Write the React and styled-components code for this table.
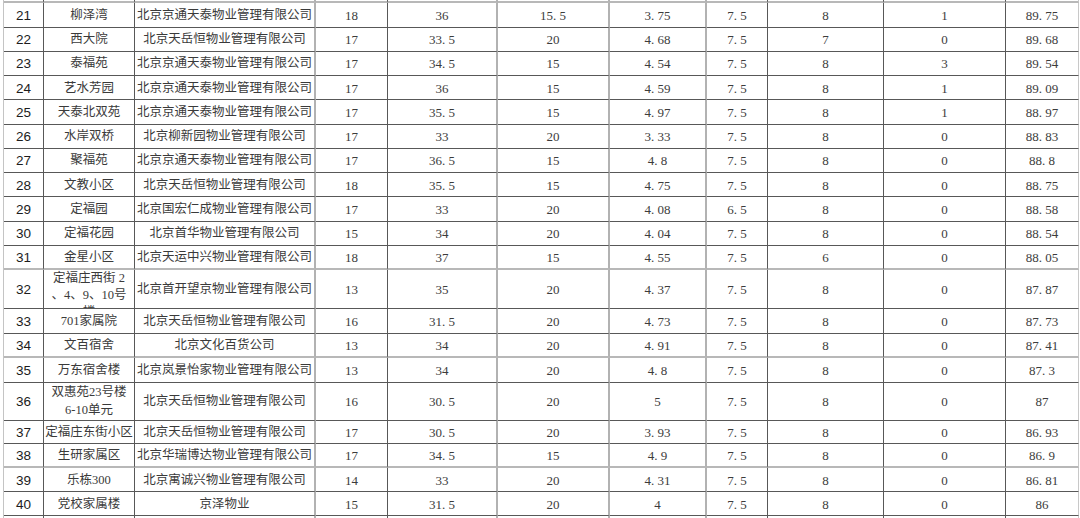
import React from 'react';
import styled, { createGlobalStyle } from 'styled-components';

const GlobalStyle = createGlobalStyle`
  html, body {
    margin: 0;
    padding: 0;
    background: #ffffff;
    overflow: hidden;
  }
`;

const Sheet = styled.div`
  width: 1080px;
  height: 518px;
  overflow: hidden;
  padding-left: 3px;
  box-sizing: border-box;
`;

const Table = styled.table`
  margin-top: -21px;
  border-collapse: separate;
  border-spacing: 0;
  table-layout: fixed;
  width: 1075px;
  border-left: 1px solid #c4c4c4;
`;

const Row = styled.tr`
  height: ${props => props.$h || 24.25}px;
`;

const Cell = styled.td`
  box-sizing: border-box;
  padding: 0;
  height: ${props => props.$h || 24.25}px;
  text-align: center;
  vertical-align: middle;
  white-space: nowrap;
  overflow: hidden;
  border-right: ${props => props.$soft ? '2px solid #b2b2b2' : '1px solid #585858'};
  border-bottom: ${props => props.$softRow ? '2px solid #b8b8b8' : '1px solid #585858'};
  ${props => props.$last && 'border-right: 1px solid #c8c8c8;'}
`;

const Index = styled.span`
  font-family: "Liberation Sans", Arial, sans-serif;
  font-size: 13.5px;
  color: #1c1c1c;
`;

const Name = styled.div`
  font-family: "Liberation Serif", "Noto Sans CJK SC", serif;
  font-size: 12.5px;
  line-height: ${props => props.$lh || 18}px;
  color: #3a3a3a;
  max-height: ${props => props.$max || 40}px;
  overflow: hidden;
`;

const Value = styled.span`
  font-family: "Liberation Serif", "Times New Roman", serif;
  font-size: 13px;
  color: #3c3c3c;
`;

const Dot = styled.span`
  display: inline-block;
  width: 0.5em;
  text-align: left;
`;

const cols = [40, 91, 181, 72, 110, 112, 97, 61, 116, 122, 73];
// columns whose right edge is drawn as a lighter, thicker line
const softCols = [2, 4, 5, 6];

const rows = [
  { n: 20, blank: true, softRow: true },
  { n: 21, name: '柳泽湾', co: '北京京通天泰物业管理有限公司', v: ['18', '36', '15.5', '3.75', '7.5', '8', '1', '89.75'] },
  { n: 22, name: '西大院', co: '北京天岳恒物业管理有限公司', v: ['17', '33.5', '20', '4.68', '7.5', '7', '0', '89.68'] },
  { n: 23, name: '泰福苑', co: '北京京通天泰物业管理有限公司', v: ['17', '34.5', '15', '4.54', '7.5', '8', '3', '89.54'] },
  { n: 24, name: '艺水芳园', co: '北京京通天泰物业管理有限公司', v: ['17', '36', '15', '4.59', '7.5', '8', '1', '89.09'] },
  { n: 25, name: '天泰北双苑', co: '北京京通天泰物业管理有限公司', v: ['17', '35.5', '15', '4.97', '7.5', '8', '1', '88.97'] },
  { n: 26, name: '水岸双桥', co: '北京柳新园物业管理有限公司', v: ['17', '33', '20', '3.33', '7.5', '8', '0', '88.83'] },
  { n: 27, name: '聚福苑', co: '北京京通天泰物业管理有限公司', v: ['17', '36.5', '15', '4.8', '7.5', '8', '0', '88.8'] },
  { n: 28, name: '文教小区', co: '北京天岳恒物业管理有限公司', v: ['18', '35.5', '15', '4.75', '7.5', '8', '0', '88.75'] },
  { n: 29, name: '定福园', co: '北京国宏仁成物业管理有限公司', v: ['17', '33', '20', '4.08', '6.5', '8', '0', '88.58'] },
  { n: 30, name: '定福花园', co: '北京首华物业管理有限公司', v: ['15', '34', '20', '4.04', '7.5', '8', '0', '88.54'] },
  { n: 31, name: '金星小区', co: '北京天运中兴物业管理有限公司', v: ['18', '37', '15', '4.55', '7.5', '6', '0', '88.05'], softRow: true },
  { n: 32, name: ['定福庄西街 2', '、4、9、10号', '楼'], co: '北京首开望京物业管理有限公司', v: ['13', '35', '20', '4.37', '7.5', '8', '0', '87.87'], h: 39, max: 38, lh: 17 },
  { n: 33, name: '701家属院', co: '北京天岳恒物业管理有限公司', v: ['16', '31.5', '20', '4.73', '7.5', '8', '0', '87.73'], h: 25 },
  { n: 34, name: '文百宿舍', co: '北京文化百货公司', v: ['13', '34', '20', '4.91', '7.5', '8', '0', '87.41'], softRow: true },
  { n: 35, name: '万东宿舍楼', co: '北京岚景怡家物业管理有限公司', v: ['13', '34', '20', '4.8', '7.5', '8', '0', '87.3'] },
  { n: 36, name: ['双惠苑23号楼', '6-10单元'], co: '北京天岳恒物业管理有限公司', v: ['16', '30.5', '20', '5', '7.5', '8', '0', '87'], h: 38 },
  { n: 37, name: '定福庄东街小区', co: '北京天岳恒物业管理有限公司', v: ['17', '30.5', '20', '3.93', '7.5', '8', '0', '86.93'], h: 23.5 },
  { n: 38, name: '生研家属区', co: '北京华瑞博达物业管理有限公司', v: ['17', '34.5', '15', '4.9', '7.5', '8', '0', '86.9'], softRow: true, h: 24 },
  { n: 39, name: '乐栋300', co: '北京寓诚兴物业管理有限公司', v: ['14', '33', '20', '4.31', '7.5', '8', '0', '86.81'], h: 24 },
  { n: 40, name: '党校家属楼', co: '京泽物业', v: ['15', '31.5', '20', '4', '7.5', '8', '0', '86'], h: 24 },
  { n: 41, blank: true },
];

function Num({ value }) {
  const [whole, frac] = value.split('.');
  return (
    <Value>
      {whole}
      {frac !== undefined && <Dot>.</Dot>}
      {frac}
    </Value>
  );
}

function NameText({ row }) {
  const lines = Array.isArray(row.name) ? row.name : [row.name];
  return (
    <Name $max={row.max} $lh={row.lh}>
      {lines.map((line, i) => (
        <div key={i}>{line}</div>
      ))}
    </Name>
  );
}

export default function App() {
  return (
    <>
      <GlobalStyle />
      <Sheet>
        <Table>
          <colgroup>
            {cols.map((w, i) => (
              <col key={i} style={{ width: w }} />
            ))}
          </colgroup>
          <tbody>
            {rows.map((row) => {
              const cellProps = (i) => ({
                $h: row.h,
                $soft: softCols.includes(i),
                $softRow: row.softRow,
                $last: i === cols.length - 1,
              });
              if (row.blank) {
                return (
                  <Row key={row.n} $h={row.h}>
                    {cols.map((_, i) => (
                      <Cell key={i} {...cellProps(i)} />
                    ))}
                  </Row>
                );
              }
              return (
                <Row key={row.n} $h={row.h}>
                  <Cell {...cellProps(0)}>
                    <Index>{row.n}</Index>
                  </Cell>
                  <Cell {...cellProps(1)}>
                    <NameText row={row} />
                  </Cell>
                  <Cell {...cellProps(2)}>
                    <Name>{row.co}</Name>
                  </Cell>
                  {row.v.map((val, i) => (
                    <Cell key={i} {...cellProps(i + 3)}>
                      <Num value={val} />
                    </Cell>
                  ))}
                </Row>
              );
            })}
          </tbody>
        </Table>
      </Sheet>
    </>
  );
}
